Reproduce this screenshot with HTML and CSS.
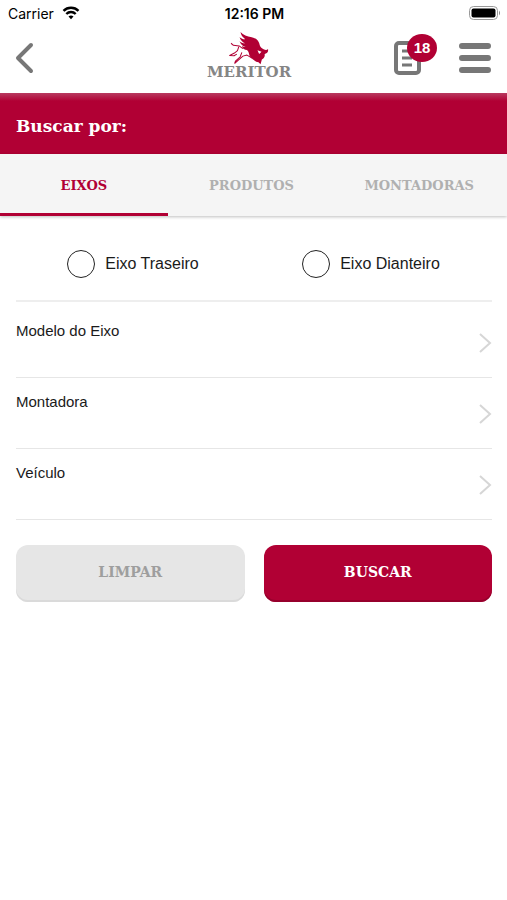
FILE: index.html
```html
<!DOCTYPE html>
<html lang="pt-BR">
<head>
    <meta charset="UTF-8">
    <meta name="viewport" content="width=device-width, initial-scale=1.0">
    <title>Meritor - Buscar</title>
    <link rel="stylesheet" href="styles.css">
</head>
<body>

    <!-- Status Bar -->
    <div class="status-bar">
        <div class="carrier">
            <span>Carrier</span>
            <svg width="18" height="14" viewBox="0 0 18 14" fill="none" stroke="#000" stroke-width="2.4">
                <path d="M1.5 4.9a10.6 10.6 0 0 1 15 0"/>
                <path d="M4.3 8a6.6 6.6 0 0 1 9.400 0"/>
                <path d="M9 13.2l-2.5-2.6a3.6 3.6 0 0 1 5 0z" fill="#000" stroke="none"/>
            </svg>
        </div>
        <div class="time">12:16 PM</div>
        <div class="battery">
            <svg width="32" height="14" viewBox="0 0 32 14">
                <rect x="0.5" y="0.5" width="28" height="13" rx="4" fill="#fff" stroke="#999"/>
                <rect x="2.5" y="2.5" width="24" height="9" rx="2" fill="#000"/>
                <path d="M30 4.5q2 2.5 0 5z" fill="#888"/>
            </svg>
        </div>
    </div>

    <!-- Header -->
    <header class="header">
        <button type="button" class="icon-btn back-btn" aria-label="Voltar">
            <svg width="20" height="32" viewBox="0 0 20 32" fill="none" stroke="#777" stroke-width="4" stroke-linecap="round" stroke-linejoin="round">
                <path d="M17 3L4 16l13 13"/>
            </svg>
        </button>

        <a href="#" class="logo">
            <svg width="40" height="33" viewBox="175 98 118 97" fill="#b10034">
                <path d="M209 98C217 107 228 111 242 113C256 116 264 125 266 138C268 143 272 147 277 149C283 152 287 152 290 148C292 156 287 161 280 163C282 169 278 175 272 179L268 193L262 187C256 187 251 183 245 178C239 174 235 169 234 162C233 157 231 153 228 151C221 151 215 146 213 139C217 142 221 143 224 142C216 140 209 134 206 125C212 130 218 132 223 131C215 128 209 122 206 113C212 117 218 120 223 119C215 113 210 107 209 98Z"/>
                <path d="M259 152L271 156L264 163Z" fill="#fff"/>
                <g fill="none" stroke="#b10034" stroke-width="3" stroke-linejoin="round">
                    <path d="M181 131L188 137L205 139L216 147"/>
                    <path d="M204 141L200 153L191 160L177 167L190 168L198 163"/>
                    <path d="M213 158L208 171L194 184L192 190L206 178L216 169L228 166L243 175"/>
                </g>
            </svg>
            <span class="logo-name">MERITOR</span>
        </a>

        <div class="header-actions">
            <button type="button" class="icon-btn list-btn" aria-label="Lista, 18 itens">
                <svg width="28" height="34" viewBox="0 0 28 34" fill="none" stroke="#777">
                    <rect x="2" y="2" width="23" height="30" rx="3" stroke-width="4"/>
                    <path d="M8 10h10M8 17h10M8 24h10" stroke-width="3"/>
                </svg>
                <span class="badge">18</span>
            </button>
            <button type="button" class="icon-btn menu-btn" aria-label="Menu">
                <svg width="34" height="31" viewBox="0 0 34 31" stroke="#777" stroke-width="6" stroke-linecap="round">
                    <path d="M4 4h26M4 16h26M4 28h26"/>
                </svg>
            </button>
        </div>
    </header>

    <h1 class="title">Buscar por:</h1>

    <!-- Tabs -->
    <nav class="tabs">
        <a href="#" class="tab active">EIXOS</a>
        <a href="#" class="tab">PRODUTOS</a>
        <a href="#" class="tab">MONTADORAS</a>
    </nav>

    <!-- Search Form -->
    <form class="search-form">
        <div class="options">
            <label class="option" for="traseiro">
                <input type="radio" id="traseiro" name="eixo">
                Eixo Traseiro
            </label>
            <label class="option" for="dianteiro">
                <input type="radio" id="dianteiro" name="eixo">
                Eixo Dianteiro
            </label>
        </div>

        <div class="fields">
            <button type="button" class="field">
                <span>Modelo do Eixo</span>
                <svg class="chevron" width="14" height="22" viewBox="0 0 14 22"><path d="M2 2l10 9-10 9"/></svg>
            </button>
            <button type="button" class="field">
                <span>Montadora</span>
                <svg class="chevron" width="14" height="22" viewBox="0 0 14 22"><path d="M2 2l10 9-10 9"/></svg>
            </button>
            <button type="button" class="field">
                <span>Veículo</span>
                <svg class="chevron" width="14" height="22" viewBox="0 0 14 22"><path d="M2 2l10 9-10 9"/></svg>
            </button>
        </div>

        <div class="buttons">
            <button type="reset" class="btn btn-clear">LIMPAR</button>
            <button type="button" class="btn btn-search">BUSCAR</button>
        </div>
    </form>

</body>
</html>
```
FILE: styles.css
```css
/* General Styles */
* {
    box-sizing: border-box;
}

body {
    font-family: "Liberation Sans", Arial, sans-serif;
    margin: 0;
    background-color: #fff;
    color: #1a1a1a;
}

button {
    font-family: inherit;
    border: none;
    padding: 0;
    background: none;
    cursor: pointer;
}

a {
    text-decoration: none;
}

svg {
    display: block;
}

/* Status Bar */
.status-bar {
    display: grid;
    grid-template-columns: 1fr auto 1fr;
    align-items: center;
    height: 26px;
    padding: 0 6px 0 8px;
    font-family: Inter, sans-serif;
    font-size: 14px;
    color: #000;
}

.carrier {
    display: flex;
    align-items: center;
    gap: 8px;
}

.time {
    font-weight: 600;
}

.battery {
    justify-self: end;
}

/* Header */
.header {
    display: grid;
    grid-template-columns: 1fr auto 1fr;
    align-items: center;
    height: 67px;
    padding: 0 15px 4px 14px;
}

.icon-btn {
    display: block;
}

.back-btn {
    justify-self: start;
}

.logo {
    display: flex;
    flex-direction: column;
    align-items: center;
    padding: 0 8px 4px 0;
}

.logo-name {
    font-family: "DejaVu Serif", serif;
    font-size: 15px;
    font-weight: bold;
    line-height: 14px;
    color: #858585;
}

.header-actions {
    display: flex;
    align-items: center;
    justify-content: flex-end;
    gap: 36px;
}

.list-btn {
    position: relative;
}

.badge {
    position: absolute;
    top: -7px;
    left: 13px;
    width: 30px;
    height: 28px;
    border-radius: 50%;
    background-color: #b10034;
    color: #fff;
    font-size: 15px;
    font-weight: bold;
    line-height: 28px;
    text-align: center;
}

/* Title */
.title {
    margin: 0;
    padding: 23px 16px 18px;
    background: linear-gradient(#b83a60, #b10034 8px);
    color: #fff;
    font-family: "DejaVu Serif", serif;
    font-size: 17px;
    line-height: 20px;
}

/* Tabs */
.tabs {
    display: flex;
    padding-right: 4px;
    background-color: #f5f5f5;
    box-shadow: 0 1px 3px rgba(0, 0, 0, 0.25);
}

.tab {
    flex: 1 1 0;
    padding: 22px 0 17px;
    border-bottom: 3px solid transparent;
    color: #b0b0b0;
    font-family: "DejaVu Serif", serif;
    font-size: 13px;
    font-weight: bold;
    line-height: 20px;
    text-align: center;
}

.tab.active {
    border-bottom-color: #b10034;
    color: #b10034;
}

/* Search Form */
.search-form {
    padding: 0 15px 24px 16px;
}

.options {
    display: grid;
    grid-template-columns: 1fr 1fr;
    padding: 34px 0 22px;
    border-bottom: 2px solid #eee;
}

.option {
    display: flex;
    align-items: center;
    justify-content: center;
    gap: 10px;
    padding-right: 4px;
    font-size: 16px;
}

.option input {
    appearance: none;
    width: 28px;
    height: 28px;
    margin: 0;
    border: 1px solid #222;
    border-radius: 50%;
}

.option input:checked {
    background-color: #b10034;
    box-shadow: inset 0 0 0 5px #fff;
}

.fields {
    padding-top: 5px;
}

.field {
    display: flex;
    justify-content: space-between;
    width: 100%;
    height: 71px;
    padding-top: 15px;
    border-bottom: 1px solid #e6e6e6;
    color: #1a1a1a;
    font-size: 15px;
    line-height: 18px;
}

.chevron {
    margin-top: 10px;
    fill: none;
    stroke: #d6d6d6;
    stroke-width: 2;
}

/* Buttons */
.buttons {
    display: grid;
    grid-template-columns: 1fr 1fr;
    gap: 19px;
    padding-top: 25px;
}

.btn {
    height: 57px;
    padding-bottom: 4px;
    border-radius: 12px;
    font-family: "DejaVu Serif", serif;
    font-size: 14px;
    font-weight: bold;
}

.btn-clear {
    background-color: #e6e6e6;
    box-shadow: inset 0 -2px 0 #dadada;
    color: #9e9e9e;
}

.btn-search {
    background-color: #b10034;
    box-shadow: inset 0 -2px 0 #96002c;
    color: #fff;
}
```
